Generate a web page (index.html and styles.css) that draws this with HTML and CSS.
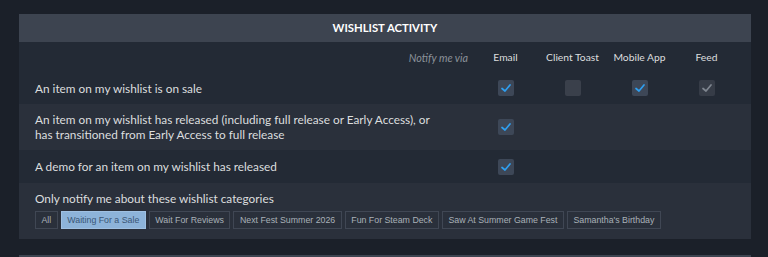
FILE: index.html
```html
<!DOCTYPE html>
<html>
<head>
<meta charset="utf-8">
<link rel="stylesheet" href="styles.css">
</head>
<body>
<div class="panel">
  <div class="panel-header">WISHLIST ACTIVITY</div>
  <div class="row row-head">
    <div class="label via">Notify me via</div>
    <div class="col">Email</div>
    <div class="col">Client Toast</div>
    <div class="col">Mobile App</div>
    <div class="col">Feed</div>
  </div>
  <div class="row row-first">
    <div class="label">An item on my wishlist is on sale</div>
    <div class="col"><span class="cb on"><svg viewBox="0 0 16 16"><polyline points="4,8.5 7,11 12,5"/></svg></span></div>
    <div class="col"><span class="cb"></span></div>
    <div class="col"><span class="cb on"><svg viewBox="0 0 16 16"><polyline points="4,8.5 7,11 12,5"/></svg></span></div>
    <div class="col"><span class="cb dis"><svg viewBox="0 0 16 16"><polyline points="4,8.5 7,11 12,5"/></svg></span></div>
  </div>
  <div class="row alt row-two">
    <div class="label">An item on my wishlist has released (including full release or Early Access), or<br>has transitioned from Early Access to full release</div>
    <div class="col"><span class="cb on"><svg viewBox="0 0 16 16"><polyline points="4,8.5 7,11 12,5"/></svg></span></div>
    <div class="col"></div>
    <div class="col"></div>
    <div class="col"></div>
  </div>
  <div class="row row-three">
    <div class="label">A demo for an item on my wishlist has released</div>
    <div class="col"><span class="cb on"><svg viewBox="0 0 16 16"><polyline points="4,8.5 7,11 12,5"/></svg></span></div>
    <div class="col"></div>
    <div class="col"></div>
    <div class="col"></div>
  </div>
  <div class="cats alt">
    <div class="cats-title">Only notify me about these wishlist categories</div>
    <div class="tags">
      <span class="tag">All</span>
      <span class="tag sel">Waiting For a Sale</span>
      <span class="tag">Wait For Reviews</span>
      <span class="tag">Next Fest Summer 2026</span>
      <span class="tag">Fun For Steam Deck</span>
      <span class="tag">Saw At Summer Game Fest</span>
      <span class="tag">Samantha's Birthday</span>
    </div>
  </div>
</div>
<div class="panel next">
  <div class="panel-header small"></div>
</div>
</body>
</html>
```
FILE: styles.css
```css
html, body {
  margin: 0;
  padding: 0;
}
body {
  background: #1b2029;
  padding: 14px 17px 0 19px;
  font-family: Lato, "Liberation Sans", sans-serif;
  color: #dcdedf;
  font-size: 11.8px;
  overflow: hidden;
  height: 257px;
  box-sizing: border-box;
}
.panel {
  width: 732px;
  background: #232a35;
}
.panel.next {
  margin-top: 16px;
  background: transparent;
}
.panel-header {
  height: 28px;
  line-height: 28px;
  background: #3d4450;
  color: #ffffff;
  font-weight: bold;
  font-size: 11.3px;
  text-align: center;
}
.panel-header.small {
  height: 2px;
}
.row {
  display: grid;
  grid-template-columns: 1fr 67px 67px 67px 67px;
  align-items: center;
  padding: 0 11px 0 16px;
}
.alt {
  background: #2a303b;
}
.row-head {
  height: 30px;
  font-size: 10.3px;
}
.row-first { height: 32px; }
.row-two { height: 46px; }
.row-three { height: 33px; }
.label {
  line-height: 15px;
}
.via {
  text-align: right;
  font-style: italic;
  color: #8b929a;
  font-size: 10.8px;
  padding-right: 4px;
}
.col {
  display: flex;
  justify-content: center;
  align-items: center;
  white-space: nowrap;
}
.cb {
  display: block;
  width: 16px;
  height: 16px;
  border-radius: 2px;
  background: #3a404b;
}
.cb svg {
  display: block;
  width: 16px;
  height: 16px;
  fill: none;
  stroke-width: 1.7;
  stroke-linecap: round;
  stroke-linejoin: round;
}
.cb.on { background: #3d4757; }
.cb.on svg { stroke: #2f9ff0; }
.cb.dis { background: #363c47; }
.cb.dis svg { stroke: #7f8690; }
.cats {
  height: 56px;
  padding: 8px 16px 0 16px;
  box-sizing: border-box;
}
.cats-title {
  line-height: 15px;
}
.tags {
  display: flex;
  gap: 3px;
  margin-top: 5px;
}
.tag {
  height: 18px;
  line-height: 16px;
  box-sizing: border-box;
  border: 1px solid #404754;
  padding: 0 5.5px;
  font-family: "Liberation Sans", Arial, sans-serif;
  font-size: 8.8px;
  color: #a9b0b8;
  white-space: nowrap;
}
.tag.sel {
  background: #8db3d9;
  border-color: #9fc0e2;
  color: #3a5676;
}
```
